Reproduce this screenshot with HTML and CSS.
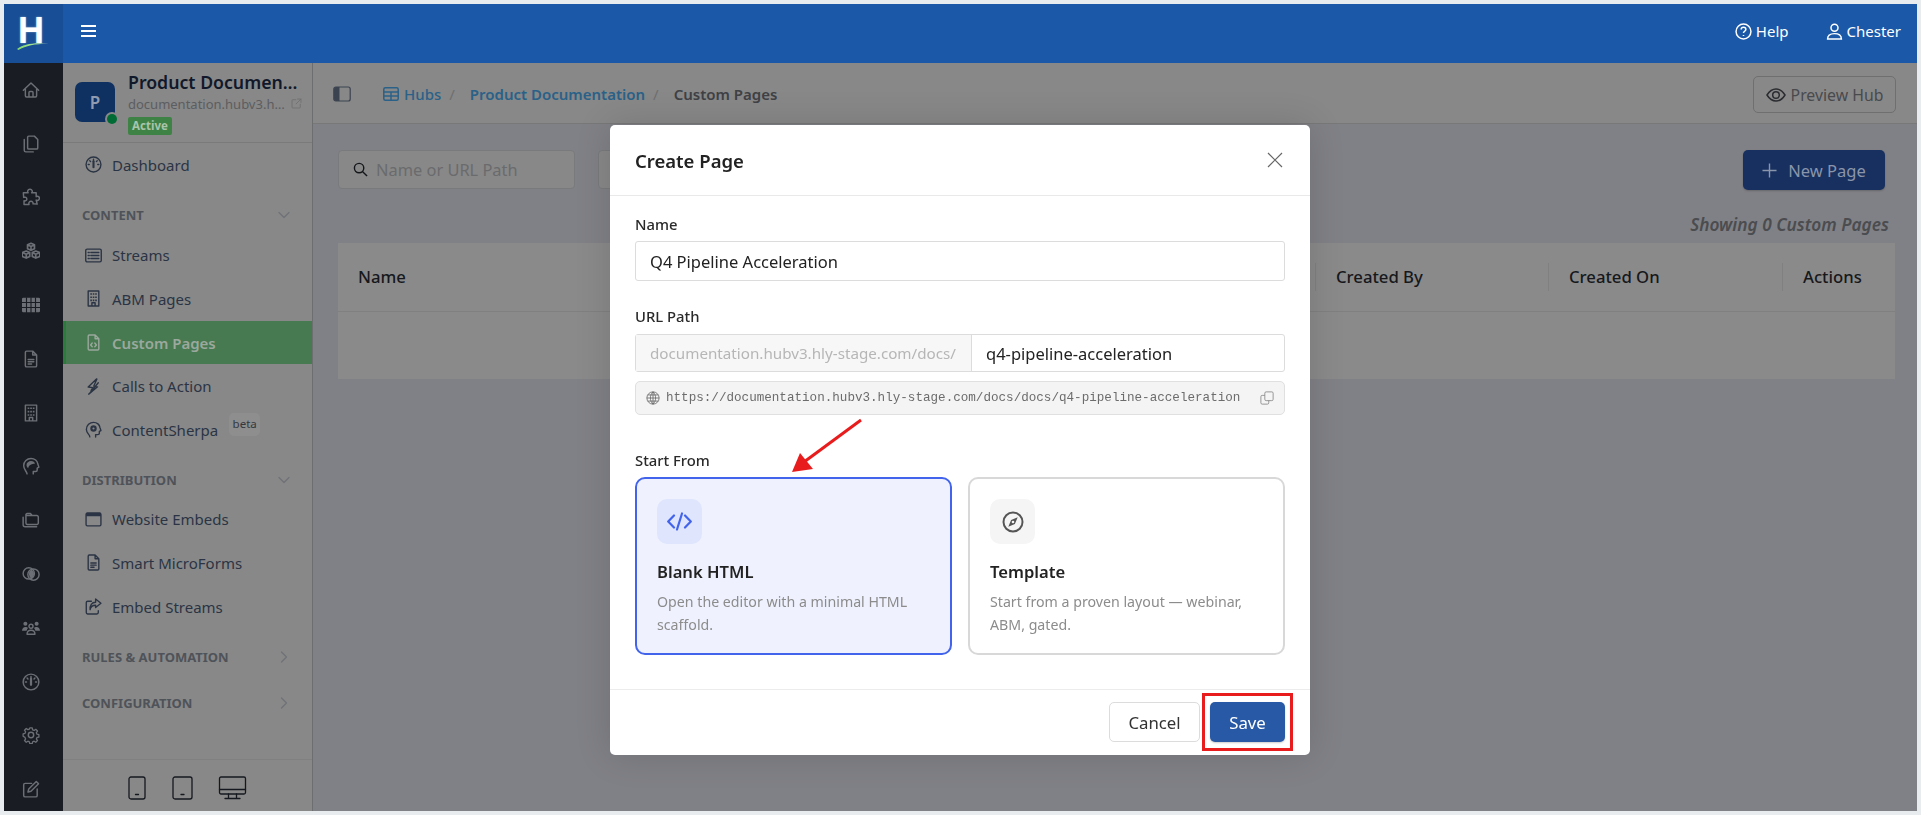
FILE: index.html
```html
<!DOCTYPE html>
<html lang="en">
<head>
<meta charset="utf-8">
<title>Create Page</title>
<link rel="stylesheet" href="styles.css">
</head>
<body>
<svg class="defs" width="0" height="0" aria-hidden="true">
  <symbol id="i-home" viewBox="0 0 16 16"><path d="M1.2 8.200 8 1.800l6.800 6.400M3 7v6.200a1 1 0 0 0 1 1h8a1 1 0 0 0 1-1V7M6.200 14.200v-4a.8.8 0 0 1 .8-.8h2a.8.8 0 0 1 .8.8v4"/></symbol>
  <symbol id="i-files" viewBox="0 0 16 16"><path d="M6 1h5l3 3v7.500a1 1 0 0 1-1 1H6a1 1 0 0 1-1-1V2a1 1 0 0 1 1-1zM2 4v9.500A1.500 1.500 0 0 0 3.500 15H10"/></symbol>
  <symbol id="i-puzzle" viewBox="0 0 16 16"><path d="M5.500 4.300c-.9-.9-.6-3 1.500-3.200 2-.1 2.700 2 1.600 3.200h4v3.400c1-.7 3-.3 2.900 1.500-.1 1.800-2 2.300-2.900 1.500l.9 3.600-3.700-.2c.3-1.100-.5-2.300-1.800-2.300-1.400 0-2.200 1.300-1.800 2.800H1.800v-3.300c1 .5 2.500-.1 2.500-1.400S3 7.700 1.500 8.400L1.200 4.300z"/></symbol>
  <symbol id="i-boxes" viewBox="1 1.500 14 12"><path d="M8 1.500l2.700 1.200v3L8 7 5.300 5.700v-3zM4.300 7.500 7 8.700v3l-2.700 1.300L1.200 11.700v-3zM11.700 7.500l3.100 1.200v3L11.700 13 9 11.700v-3zM5.300 2.700 8 4l2.700-1.300M8 4v3M1.200 8.700l3.100 1.300L7 8.700M4.300 10v3M9 8.700l2.700 1.300 3.100-1.300M11.700 10v3"/></symbol>
  <symbol id="i-grid" viewBox="0 0 16 16"><rect class="fill" x="0" y="1.500" width="16" height="13" rx="1.200"/><path class="cut" d="M0 5.800h16M0 10.200h16M4 1.500v13M8 1.500v13M12 1.500v13"/></symbol>
  <symbol id="i-file" viewBox="0 0 16 16"><path d="M4 1h5.500L13 4.500V14a1 1 0 0 1-1 1H4a1 1 0 0 1-1-1V2a1 1 0 0 1 1-1zM9.500 1v3.500H13M5.500 8.500h5M5.500 10.500h5M5.500 12.500h3"/></symbol>
  <symbol id="i-building" viewBox="0 0 16 16"><path d="M3 1h10v14H3zM6.500 15v-3h3v3"/><path class="solid" d="M5 3h1.500v1.500H5zM7.300 3h1.500v1.500H7.300zM9.600 3h1.500v1.500H9.600zM5 6h1.500v1.500H5zM7.300 6h1.500v1.500H7.300zM9.600 6h1.500v1.500H9.600zM5 9h1.500v1.500H5zM7.300 9h1.500v1.500H7.300zM9.600 9h1.500v1.500H9.600z"/></symbol>
  <symbol id="i-head" viewBox="0 0 16 16"><path d="M4.500 15c0-2-3-3.700-3-7.200C1.500 4 4.500 1.300 8 1.300c3.300 0 5.700 2.200 6 4.700l1 3-1.500.8v1.700c0 .8-.6 1.300-1.400 1.300H10V15"/><path class="solid" d="M4 7c0-2 2-3.500 4-3.500 2 0 3.500 1 3.500 2.500C9 6 6 7 5.500 10 4.500 9 4 8 4 7z"/></symbol>
  <symbol id="i-folders" viewBox="0 0 16 16"><path d="M3.500 3.800V4h9.700a1.300 1.300 0 0 1 1.300 1.300v5.400a1.300 1.300 0 0 1-1.300 1.300H4.800a1.300 1.300 0 0 1-1.300-1.300V3.300A1 1 0 0 1 4.500 2.300h3L9 4M1 5.500v6.700A1.800 1.800 0 0 0 2.800 14H13"/></symbol>
  <symbol id="i-overlap" viewBox="0 0 16 16"><circle cx="6" cy="7.500" r="5"/><circle cx="10.200" cy="8.500" r="5"/><path class="solid" d="M8.400 4a5 5 0 0 1 0 8.300 5 5 0 0 1 0-8.300z"/></symbol>
  <symbol id="i-people" viewBox="0 0 16 16"><circle class="solid" cx="3" cy="4.300" r="1.800"/><circle class="solid" cx="13" cy="4.300" r="1.800"/><circle cx="8" cy="6.500" r="1.800"/><path class="solid" d="M0 10.500c0-2.500 1.500-3.500 3-3.500 1 0 1.800.3 2.300 1-.6.700-1 1.500-1.200 2.500zM16 10.500c0-2.500-1.500-3.500-3-3.500-1 0-1.800.3-2.300 1 .6.700 1 1.500 1.200 2.500z"/><path d="M4.500 13.500c0-2.500 1.500-3.500 3.500-3.500s3.500 1 3.500 3.500z"/></symbol>
  <symbol id="i-speed" viewBox="0 0 16 16"><circle cx="8" cy="8" r="7"/><path d="M8 3v1M3 8h1M12 8h1M4.500 4.500l.8.800M11.500 4.500l-.8.800"/><path class="thick" d="M8 5v5.500"/></symbol>
  <symbol id="i-gear" viewBox="0 0 16 16"><circle cx="8" cy="8" r="2.400"/><path d="M6.800 1h2.400l.4 1.900 1.500.6 1.600-1.100 1.700 1.700-1.100 1.600.6 1.500 1.900.4v2.400l-1.900.4-.6 1.500 1.100 1.600-1.700 1.700-1.600-1.100-1.500.6-.4 1.900H6.800l-.4-1.900-1.500-.6-1.600 1.100-1.700-1.700 1.100-1.600-.6-1.500L.2 9.200V6.800l1.900-.4.600-1.500-1.100-1.600 1.700-1.700 1.600 1.100 1.500-.6z" transform="translate(.8 .8) scale(.9)"/></symbol>
  <symbol id="i-pencil" viewBox="0 0 16 16"><path d="M8.500 3H2.800a1.300 1.300 0 0 0-1.300 1.300v9.400A1.300 1.300 0 0 0 2.800 15h9.400a1.300 1.300 0 0 0 1.300-1.300V8M12.700 1.300l2 2L8 10l-2.700.7.700-2.700z"/></symbol>
  <symbol id="i-list" viewBox="0 0 16 16"><rect x=".7" y="2" width="14.600" height="12" rx="1.300"/><path d="M5.500 5.200h7.500M5.500 8h7.500M5.500 10.800h7.500M3 5.200h1M3 8h1M3 10.800h1"/></symbol>
  <symbol id="i-code-file" viewBox="0 0 16 16"><path d="M4 1h5.500L13 4.500V14a1 1 0 0 1-1 1H4a1 1 0 0 1-1-1V2a1 1 0 0 1 1-1zM9.500 1v3.500H13M6.800 8.500 5.300 10.300l1.500 1.700M9.200 8.500l1.500 1.800-1.500 1.700"/></symbol>
  <symbol id="i-bolt" viewBox="0 0 16 16"><path d="M10.800 1 3 8.500l4.500.5-1.800 2.600M12.500 4.500 5 13.500l-1.500 1.700 8.300-6.900-3.600-.6 3-6.700"/></symbol>
  <symbol id="i-sherpa" viewBox="0 0 16 16"><path d="M4.500 15c.2-2-3.200-3.500-3.200-7C1.300 4 4.500 1.300 8 1.300c3.300 0 5.800 2.200 6 4.700l1 3-1.500.8v1.700c0 .8-.6 1.300-1.400 1.300H10V15"/><circle class="solid" cx="8" cy="7" r="3"/><circle class="hole" cx="8" cy="7" r="1"/></symbol>
  <symbol id="i-window" viewBox="0 0 16 16"><rect x="1" y="2" width="14" height="12" rx="1.200"/><path class="solid" d="M1 2.500a1 1 0 0 1 1-1h12a1 1 0 0 1 1 1V5H1z"/></symbol>
  <symbol id="i-embed" viewBox="0 0 16 16"><path d="M6 3H2.500A1.300 1.300 0 0 0 1.200 4.300v9.400A1.300 1.300 0 0 0 2.500 15h8.700a1.300 1.300 0 0 0 1.300-1.300V12M10 1l5 4-5 4V6.800C7 6.800 5.200 8 4.800 11c-.3-4 1.500-7 5.200-7z"/></symbol>
  <symbol id="i-ext" viewBox="0 0 16 16"><path d="M7 2.500H2.500a1 1 0 0 0-1 1v10a1 1 0 0 0 1 1h10a1 1 0 0 0 1-1V9M9.500 1.500h5v5M14.500 1.500 7.500 8.500"/></symbol>
  <symbol id="i-phone" viewBox="0 0 18 24"><rect x="1" y="1" width="16" height="22" rx="2"/><path d="M7.500 18.500h3"/></symbol>
  <symbol id="i-tablet" viewBox="0 0 21 24"><rect x="1" y="1" width="19" height="22" rx="2"/><path d="M9 18.500h3"/></symbol>
  <symbol id="i-desktop" viewBox="0 0 28 24"><rect x="1" y="1" width="26" height="17" rx="1.500"/><path d="M1 13.500h26M10 18v4M18 18v4M6.500 22.500h15"/></symbol>
  <symbol id="i-chev-d" viewBox="0 0 12 12"><path d="M1 3.500 6 8.500l5-5"/></symbol>
  <symbol id="i-chev-r" viewBox="0 0 12 12"><path d="M3.500 1l5 5-5 5"/></symbol>
</svg>

<div class="frame">
  <header class="topbar">
    <div class="logo">
      <span class="logo-h">H</span>
      <svg class="logo-swoosh" viewBox="0 0 32 8"><defs><linearGradient id="swoosh"><stop offset="0" stop-color="#7fd66e"/><stop offset=".6" stop-color="#a9e59a"/><stop offset="1" stop-color="#dff3e0"/></linearGradient></defs><path fill="url(#swoosh)" d="M0 7C6 2 18 0 32 1.800 20 1.500 9 3.500 1.500 8z"/></svg>
    </div>
    <button class="burger" aria-label="Menu"><span></span><span></span><span></span></button>
    <div class="top-links">
      <a class="top-link top-help"><svg class="ico-top" viewBox="0 0 16 16"><circle cx="8" cy="8" r="7"/><path d="M5.800 6.200C5.800 4.900 6.800 4.100 8 4.100s2.200.8 2.200 2c0 1.700-2.200 1.600-2.200 3.300M8 11.300v.9"/></svg>Help</a>
      <a class="top-link"><svg class="ico-top" viewBox="0 0 16 16"><circle cx="8" cy="4.500" r="3.300"/><path d="M1.500 15c0-3.500 2.500-5 6.500-5s6.500 1.500 6.500 5z"/></svg>Chester</a>
    </div>
  </header>

  <div class="shell">
    <nav class="rail">
      <a class="rail-item"><svg class="ico"><use href="#i-home"/></svg></a>
      <a class="rail-item"><svg class="ico"><use href="#i-files"/></svg></a>
      <a class="rail-item"><svg class="ico"><use href="#i-puzzle"/></svg></a>
      <a class="rail-item"><svg class="ico"><use href="#i-boxes"/></svg></a>
      <a class="rail-item"><svg class="ico"><use href="#i-grid"/></svg></a>
      <a class="rail-item"><svg class="ico"><use href="#i-file"/></svg></a>
      <a class="rail-item"><svg class="ico"><use href="#i-building"/></svg></a>
      <a class="rail-item"><svg class="ico"><use href="#i-head"/></svg></a>
      <a class="rail-item"><svg class="ico"><use href="#i-folders"/></svg></a>
      <a class="rail-item"><svg class="ico"><use href="#i-overlap"/></svg></a>
      <a class="rail-item"><svg class="ico"><use href="#i-people"/></svg></a>
      <a class="rail-item"><svg class="ico"><use href="#i-speed"/></svg></a>
      <a class="rail-item"><svg class="ico"><use href="#i-gear"/></svg></a>
      <a class="rail-item"><svg class="ico"><use href="#i-pencil"/></svg></a>
    </nav>

    <aside class="sidebar">
      <div class="project">
        <div class="avatar">P<span class="status-dot"></span></div>
        <div class="project-info">
          <div class="project-name">Product Documen…</div>
          <div class="project-domain"><span class="domain-text">documentation.hubv3.h…</span><svg class="ico-ext"><use href="#i-ext"/></svg></div>
          <span class="badge-active">Active</span>
        </div>
      </div>
      <a class="nav-item"><svg class="ico-nav"><use href="#i-speed"/></svg>Dashboard</a>
      <div class="nav-section nav-section-first">CONTENT<svg class="chev"><use href="#i-chev-d"/></svg></div>
      <a class="nav-item"><svg class="ico-nav"><use href="#i-list"/></svg>Streams</a>
      <a class="nav-item"><svg class="ico-nav"><use href="#i-building"/></svg>ABM Pages</a>
      <a class="nav-item nav-active"><svg class="ico-nav"><use href="#i-code-file"/></svg>Custom Pages</a>
      <a class="nav-item"><svg class="ico-nav"><use href="#i-bolt"/></svg>Calls to Action</a>
      <a class="nav-item"><svg class="ico-nav"><use href="#i-sherpa"/></svg>ContentSherpa<span class="badge-beta">beta</span></a>
      <div class="nav-section">DISTRIBUTION<svg class="chev"><use href="#i-chev-d"/></svg></div>
      <a class="nav-item"><svg class="ico-nav"><use href="#i-window"/></svg>Website Embeds</a>
      <a class="nav-item"><svg class="ico-nav"><use href="#i-file"/></svg>Smart MicroForms</a>
      <a class="nav-item"><svg class="ico-nav"><use href="#i-embed"/></svg>Embed Streams</a>
      <div class="nav-section nav-section-rules">RULES &amp; AUTOMATION<svg class="chev"><use href="#i-chev-r"/></svg></div>
      <div class="nav-section">CONFIGURATION<svg class="chev"><use href="#i-chev-r"/></svg></div>
      <div class="devices">
        <svg class="dev-phone"><use href="#i-phone"/></svg>
        <svg class="dev-tablet"><use href="#i-tablet"/></svg>
        <svg class="dev-desktop"><use href="#i-desktop"/></svg>
      </div>
    </aside>

    <main class="main">
      <div class="crumbbar">
        <svg class="ico-side" viewBox="0 0 18 16"><rect x=".8" y="1" width="16.400" height="14" rx="2"/><path class="solid" d="M1 3a2 2 0 0 1 2-2h3.500v14H3a2 2 0 0 1-2-2z"/></svg>
        <svg class="ico-hubs" viewBox="0 0 16 14"><rect x=".8" y=".8" width="14.400" height="12.400" rx="1.500"/><path d="M.8 5h14.400M.8 9h14.400M8 5v8.200"/></svg>
        <a class="crumb-link">Hubs</a><span class="crumb-sep">/</span>
        <a class="crumb-link crumb-strong">Product Documentation</a><span class="crumb-sep">/</span>
        <span class="crumb-current">Custom Pages</span>
        <button class="btn-preview"><svg class="ico-eye" viewBox="0 0 20 16"><path d="M1 8c2.500-4 5.500-6 9-6s6.500 2 9 6c-2.500 4-5.500 6-9 6s-6.500-2-9-6z"/><circle cx="10" cy="8" r="3.300"/></svg>Preview Hub</button>
      </div>
      <div class="content">
        <div class="toolbar">
          <div class="search"><svg class="ico-search" viewBox="0 0 16 16"><circle cx="6.500" cy="6.500" r="5"/><path d="m10.300 10.300 4.700 4.700"/></svg><span class="placeholder">Name or URL Path</span></div>
          <div class="filter"></div>
          <button class="btn-new"><svg class="ico-plus" viewBox="0 0 16 16"><path d="M8 .5v15M.5 8h15"/></svg>New Page</button>
        </div>
        <div class="count">Showing 0 Custom Pages</div>
        <div class="table">
          <div class="thead">
            <div class="th th-name">Name</div>
            <div class="th th-by">Created By</div>
            <div class="th th-on">Created On</div>
            <div class="th th-act">Actions</div>
          </div>
          <div class="tbody"></div>
        </div>
      </div>
    </main>
  </div>
</div>

<div class="modal-layer">
  <section class="modal">
    <div class="modal-head">
      <h2 class="modal-title">Create Page</h2>
      <svg class="modal-close" viewBox="0 0 16 16"><path d="M1 1l14 14M15 1 1 15"/></svg>
    </div>
    <div class="modal-body">
      <label class="field-label">Name</label>
      <div class="input">Q4 Pipeline Acceleration</div>
      <label class="field-label field-url">URL Path</label>
      <div class="group">
        <span class="addon">documentation.hubv3.hly-stage.com/docs/</span>
        <span class="group-input">q4-pipeline-acceleration</span>
      </div>
      <div class="preview">
        <svg class="ico-globe" viewBox="0 0 16 16"><circle cx="8" cy="8" r="7"/><path d="M1 8h14M2 4.500h12M2 11.500h12M8 1c-4 4-4 10 0 14M8 1c4 4 4 10 0 14M8 1v14"/></svg>
        <span class="preview-url">https://documentation.hubv3.hly-stage.com/docs/docs/q4-pipeline-acceleration</span>
        <svg class="ico-copy" viewBox="0 0 16 16"><rect x="5.500" y="1" width="9.500" height="10" rx="1.500"/><path d="M5.500 5H2.500A1.500 1.500 0 0 0 1 6.500v7A1.500 1.500 0 0 0 2.500 15h6A1.500 1.500 0 0 0 10 13.500V11"/></svg>
      </div>
      <label class="field-label field-start">Start From</label>
      <div class="cards">
        <div class="card card-selected">
          <div class="card-icon"><svg class="ico-code" viewBox="0 0 25 19"><path d="M7 3.500 1.200 9.500 7 15.500M18 3.500l5.800 6-5.800 6M15 1.500l-5 16"/></svg></div>
          <div class="card-title">Blank HTML</div>
          <div class="card-desc">Open the editor with a minimal HTML scaffold.</div>
        </div>
        <div class="card">
          <div class="card-icon"><svg class="ico-card" viewBox="0 0 24 24"><circle cx="12" cy="12" r="9.500"/><path class="solid" d="M17 7l-3 7-7 3 3-7zM12 10.600a1.400 1.400 0 1 0 0 2.800 1.400 1.400 0 0 0 0-2.800z"/></svg></div>
          <div class="card-title">Template</div>
          <div class="card-desc">Start from a proven layout — webinar, ABM, gated.</div>
        </div>
      </div>
    </div>
    <div class="modal-foot">
      <button class="btn-cancel">Cancel</button>
      <button class="btn-save">Save</button>
    </div>
    <svg class="note-arrow" viewBox="0 0 74 56"><path class="note-line" d="M71 2 14 44"/><path class="note-head" d="M2 54 10 35 23 51z"/></svg>
    <div class="note-box"></div>
  </section>
</div>
</body>
</html>
```

FILE: styles.css
```css
* { box-sizing: border-box; }
html, body { margin: 0; height: 100%; overflow: hidden; }
body { background: #e9ecef; font-family: "Noto Sans", "Open Sans", sans-serif; color: #222; }
button { font-family: inherit; }
.defs { position: absolute; }
symbol { overflow: visible; }
symbol path, symbol circle, symbol rect { fill: none; stroke: currentColor; stroke-width: 1.300; stroke-linejoin: round; stroke-linecap: round; }
symbol .solid { fill: currentColor; stroke: none; }
symbol .fill { fill: currentColor; stroke: none; }
symbol .cut { stroke: #191c22; stroke-width: 1; }
symbol .hole { fill: #888; stroke: none; }
symbol .thick { stroke-width: 2; }

.frame { height: 815px; padding: 4px; display: flex; flex-direction: column; }

/* top bar */
.topbar { height: 59px; flex: none; background: #1b58a8; display: flex; align-items: center; color: #fff; }
.logo { width: 59px; height: 59px; background: #174e95; position: relative; display: flex; justify-content: center; padding-right: 5px; }
.logo-h { font: 700 36px/1 "Liberation Sans", sans-serif; color: #fff; margin-top: 9px; text-shadow: 0 0 2px rgba(255,255,255,.5); }
.logo-swoosh { position: absolute; left: 13px; top: 38px; width: 32px; height: 8px; }
.burger { width: 15px; height: 12px; margin: 0 0 5px 18px; padding: 0; border: 0; background: none; display: flex; flex-direction: column; justify-content: space-between; }
.burger span { height: 2px; background: #fff; display: block; }
.top-links { margin: 0 16px 5px auto; display: flex; align-items: center; font-size: 15px; }
.top-link { display: flex; align-items: center; gap: 4px; }
.top-help { margin-right: 37px; }
.ico-top { width: 17px; height: 17px; fill: none; stroke: #fff; stroke-width: 1.400; }

/* rail */
.shell { flex: 1; display: flex; min-height: 0; }
.rail { width: 59px; flex: none; background: #191c22; color: #6c7076; overflow: hidden; }
.rail-item { height: 53.800px; padding-right: 6px; display: flex; align-items: center; justify-content: center; }
.ico { width: 18px; height: 18px; }

/* sidebar */
.sidebar { width: 250px; flex: none; background: #888; border-right: 1px solid #6d6e70; display: flex; flex-direction: column; }
.project { height: 80px; flex: none; border-bottom: 1px solid #7a7a7a; padding: 8px 0 0 12px; display: flex; gap: 13px; }
.avatar { width: 40px; height: 40px; margin-top: 11px; background: #0e3162; border-radius: 7px; color: #8f9bb0; font-weight: 600; font-size: 17px; display: flex; align-items: center; justify-content: center; position: relative; }
.status-dot { position: absolute; right: -2px; bottom: -2px; width: 10px; height: 10px; border-radius: 50%; background: #006b35; box-shadow: 0 0 0 2px #888; }
.project-info { min-width: 0; width: 171px; }
.project-name { font-size: 17.700px; font-weight: 600; line-height: 22px; color: #10182a; white-space: nowrap; }
.project-domain { margin-top: 2px; display: flex; align-items: center; gap: 6px; line-height: 18px; font-size: 13px; color: #5c5d60; }
.domain-text { white-space: nowrap; }
.ico-ext { width: 11px; height: 11px; color: #707070; flex: none; margin-top: -2px; }
.badge-active { display: inline-block; margin-top: 4px; width: 44px; height: 18px; border-radius: 2px; background: #3f8245; color: #a9c4ab; font-size: 11.500px; font-weight: 700; line-height: 18px; text-align: center; vertical-align: top; }

.nav-item { height: 43.600px; flex: none; padding-left: 20px; display: flex; align-items: center; gap: 8px; font-size: 15px; color: #2b3444; }
.ico-nav { width: 21px; height: 17px; flex: none; }
.nav-active { background: #477a50; border-left: 3px solid #2c7a3c; padding-left: 17px; color: #9ba89e; font-weight: 600; }
.badge-beta { align-self: flex-start; margin: 5px 0 0 3px; width: 31px; height: 23px; border-radius: 5px; background: #8e8e8e; color: #34383f; font-size: 11.500px; line-height: 22px; text-align: center; }
.nav-section { height: 46px; flex: none; padding: 19px 22px 9px 19px; display: flex; justify-content: space-between; align-items: center; font-size: 13px; line-height: 18px; font-weight: 700; color: #4f5359; }
.nav-section-first { height: 47px; }
.nav-section-rules { margin-top: 1px; }
.chev { width: 12px; height: 12px; color: #6f7277; }
.devices { margin-top: auto; height: 52px; border-top: 1px solid #808080; padding: 16px 0 0 65px; display: flex; align-items: flex-start; color: #15181f; }
.dev-phone { width: 18px; height: 24px; }
.dev-tablet { width: 21px; height: 24px; margin-left: 26px; }
.dev-desktop { width: 29px; height: 24px; margin-left: 25px; }

/* main */
.main { flex: 1; min-width: 0; display: flex; flex-direction: column; background: #808186; }
.crumbbar { height: 61px; flex: none; background: #888; border-bottom: 1px solid #787878; display: flex; align-items: center; padding: 2px 0 0 20px; font-size: 15px; }
.ico-side { width: 18px; height: 16px; fill: none; stroke: #3b4250; stroke-width: 1.200; margin-right: 32px; }
.ico-side .solid { fill: #3b4250; stroke: none; }
.ico-hubs { width: 16px; height: 14px; fill: none; stroke: #2a6188; stroke-width: 1.500; margin-right: 5px; }
.crumb-link { color: #2a6188; font-weight: 500; }
.crumb-strong { font-weight: 600; }
.crumb-sep { color: #6f6f6f; margin: 0 15px 0 8px; }
.crumb-current { color: #3f4145; font-weight: 600; }
.btn-preview { margin: 1px 21px 0 auto; width: 143px; height: 37px; border: 1px solid #6f6f6f; border-radius: 5px; background: none; display: flex; align-items: center; justify-content: center; gap: 5px; color: #484a4d; font-size: 15.800px; }
.ico-eye { width: 20px; height: 16px; fill: none; stroke: #2a2c30; stroke-width: 1.500; }

.content { flex: 1; padding: 26px 22px 0 25px; }
.toolbar { display: flex; height: 40px; align-items: flex-start; }
.search { width: 237px; height: 39px; border: 1px solid #797a7c; border-radius: 4px; background: #888; display: flex; align-items: center; gap: 8px; padding-left: 14px; }
.ico-search { width: 15px; height: 15px; fill: none; stroke: #141619; stroke-width: 1.500; }
.placeholder { font-size: 16.400px; color: #6a6b6d; }
.filter { width: 200px; height: 39px; margin-left: 23px; border: 1px solid #797a7c; border-radius: 4px; background: #888; }
.btn-new { margin-left: auto; margin-right: 10px; width: 142px; height: 40px; border: 0; border-radius: 5px; background: #17305f; display: flex; align-items: center; justify-content: center; gap: 11px; color: #8a95ab; font-size: 16.500px; box-shadow: 0 1px 2px rgba(0,0,0,.2); }
.ico-plus { width: 15px; height: 15px; fill: none; stroke: #8a95ab; stroke-width: 1.500; }
.count { margin: 22px 6px 0 0; height: 24px; line-height: 25px; text-align: right; font-size: 17.300px; font-style: italic; font-weight: 600; color: #4b4c4f; }
.table { margin-top: 7px; background: #8a8a8a; }
.thead { height: 69px; border-bottom: 1px solid #808080; display: grid; grid-template-columns: 977px 233px 234px 113px; align-items: center; }
.th { height: 28px; line-height: 28px; padding-left: 20px; font-size: 16.700px; font-weight: 500; color: #16181c; border-left: 1px solid #808080; }
.th-name { border-left: 0; }
.tbody { height: 67px; }

/* modal */
.modal-layer { position: fixed; inset: 0; display: flex; justify-content: center; align-items: flex-start; padding: 125px 1px 0 0; }
.modal { position: relative; width: 700px; background: #fff; border-radius: 5px; box-shadow: 0 0 36px rgba(0,0,0,.14); }
.modal-head { height: 71px; border-bottom: 1px solid #e9e9e9; display: flex; align-items: center; justify-content: space-between; padding: 0 27px 0 25px; }
.modal-title { margin: 0; font-size: 18.500px; font-weight: 600; color: #222; }
.modal-close { width: 16px; height: 16px; fill: none; stroke: #666; stroke-width: 1.200; }
.modal-body { padding: 19px 25px 0; }
.field-label { display: block; line-height: 18px; font-size: 14.800px; font-weight: 500; color: #2a2a2a; margin-bottom: 8px; }
.field-url { margin: 26px 0 9px; }
.field-start { margin: 36px 0 8px; }
.input { height: 40px; border: 1px solid #dcdcdc; border-radius: 3px; padding-left: 14px; line-height: 39px; font-size: 16.500px; color: #222; }
.group { height: 38px; border: 1px solid #dcdcdc; border-radius: 3px; display: flex; line-height: 37px; }
.addon { width: 336px; flex: none; padding-left: 14px; border-right: 1px solid #dcdcdc; background: #f7f7f7; font-size: 15.200px; color: #b6b6b6; white-space: nowrap; }
.group-input { padding-left: 14px; font-size: 16.500px; color: #222; }
.preview { height: 34px; margin-top: 9px; border: 1px solid #e0e0e0; border-radius: 5px; background: #f4f4f4; display: flex; align-items: center; padding: 0 10px; }
.ico-globe { width: 14px; height: 14px; flex: none; fill: none; stroke: #6d6d6d; stroke-width: 1; }
.preview-url { margin-left: 6px; font: 12.600px "Liberation Mono", monospace; color: #6c6c6c; white-space: nowrap; }
.ico-copy { width: 14px; height: 14px; margin-left: auto; flex: none; fill: none; stroke: #8a8a8a; stroke-width: 1; }
.cards { display: grid; grid-template-columns: 1fr 1fr; gap: 16px; }
.card { height: 178px; border: 2px solid #d8d8d8; border-radius: 10px; padding: 20px; background: #fff; }
.card-selected { border-color: #4263eb; background: #eff2fe; }
.card-icon { width: 45px; height: 45px; border-radius: 10px; background: #f5f5f5; display: flex; align-items: center; justify-content: center; color: #555; }
.card-selected .card-icon { background: #dfe5fc; color: #4263eb; }
.ico-card { width: 24px; height: 24px; fill: none; stroke: currentColor; stroke-width: 2; stroke-linecap: round; stroke-linejoin: round; }
.ico-card .solid { fill: currentColor; stroke: none; fill-rule: evenodd; transform: scale(.94); transform-origin: center; }
.ico-code { width: 25px; height: 19px; fill: none; stroke: currentColor; stroke-width: 2.200; stroke-linecap: round; stroke-linejoin: round; }
.card-title { margin-top: 18px; line-height: 20px; font-size: 16.600px; font-weight: 600; color: #222; }
.card-desc { margin-top: 8px; line-height: 23px; font-size: 14.200px; color: #8c8c8c; }
.modal-foot { margin-top: 34px; border-top: 1px solid #ececec; padding: 12px 25px 13px; display: flex; justify-content: flex-end; gap: 10px; }
.btn-cancel { width: 91px; height: 40px; border: 1px solid #dcdcdc; border-radius: 5px; background: #fff; font-size: 16.800px; color: #333; }
.btn-save { width: 75px; height: 40px; border: 0; border-radius: 5px; background: #2859a6; font-size: 16.800px; color: #fff; box-shadow: 0 1px 2px rgba(0,0,0,.2); }

/* annotations drawn on the screenshot */
.note-arrow { position: absolute; left: 180px; top: 293px; width: 74px; height: 56px; }
.note-line { fill: none; stroke: #e81c1c; stroke-width: 3; }
.note-head { fill: #e81c1c; }
.note-box { position: absolute; left: 592px; top: 568px; width: 91px; height: 58px; border: 3px solid #e81c1c; }
```
